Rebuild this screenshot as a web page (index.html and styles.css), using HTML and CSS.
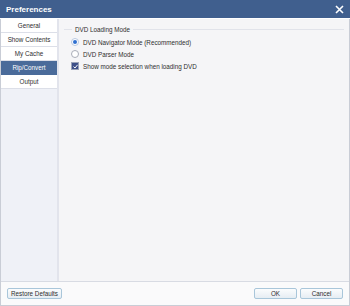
FILE: index.html
```html
<!DOCTYPE html>
<html lang="en">
<head>
    <meta charset="UTF-8">
    <title>Preferences</title>
    <link rel="stylesheet" href="styles.css">
</head>
<body>
    <div class="window">
        <header class="titlebar">
            <span class="title">Preferences</span>
            <svg class="close" width="9" height="9" viewBox="0 0 9 9">
                <path d="M1 1 L8 8 M8 1 L1 8" stroke="#fff" stroke-width="1.6" fill="none"/>
            </svg>
        </header>

        <div class="main">
            <nav class="sidebar">
                <div class="nav-item">General</div>
                <div class="nav-item">Show Contents</div>
                <div class="nav-item">My Cache</div>
                <div class="nav-item active">Rip/Convert</div>
                <div class="nav-item">Output</div>
            </nav>

            <section class="content">
                <div class="group-title">
                    <span class="line short"></span>
                    <span class="group-label">DVD Loading Mode</span>
                    <span class="line"></span>
                </div>
                <div class="options">
                    <label class="option">
                        <span class="radio checked"></span>
                        DVD Navigator Mode (Recommended)
                    </label>
                    <label class="option">
                        <span class="radio"></span>
                        DVD Parser Mode
                    </label>
                    <label class="option">
                        <span class="checkbox">
                            <svg width="5" height="5" viewBox="0 0 5 5">
                                <path d="M0.5 2.6 L2 4 L4.6 0.8" stroke="#fff" stroke-width="1" fill="none"/>
                            </svg>
                        </span>
                        Show mode selection when loading DVD
                    </label>
                </div>
            </section>
        </div>

        <footer class="footer">
            <button class="btn btn-restore">Restore Defaults</button>
            <div class="footer-right">
                <button class="btn btn-wide">OK</button>
                <button class="btn btn-wide">Cancel</button>
            </div>
        </footer>
    </div>
</body>
</html>
```

FILE: styles.css
```css
:root {
    --title-blue: #405f8e;
    --active-blue: #4a6b9a;
    --text: #2e2e2e;
    --line: #e1e3ea;
}

* {
    margin: 0;
    padding: 0;
    box-sizing: border-box;
}

body {
    font-family: 'Liberation Sans', Arial, sans-serif;
    font-size: 6.3px;
    color: var(--text);
}

.window {
    width: 350px;
    height: 306px;
    display: flex;
    flex-direction: column;
    background-color: #f5f5f7;
    border: 1px solid #c9cdd6;
    border-top: none;
}

.titlebar {
    height: 19px;
    background-color: var(--title-blue);
    display: flex;
    align-items: center;
    justify-content: space-between;
    padding: 0 6px 0 6px;
    margin: 0 -1px;
    border-bottom: 1px solid #ffffff;
}

.title {
    color: #fff;
    font-weight: bold;
    font-size: 8px;
}

.close {
    display: block;
}

.main {
    flex: 1;
    display: flex;
}

.sidebar {
    width: 58px;
    background-color: #eff1f7;
    border-right: 2px solid #e2e4ec;
}

.nav-item {
    height: 14px;
    line-height: 13px;
    text-align: center;
    background-color: #fff;
    border-bottom: 1px solid #dcdfe8;
}

.nav-item.active {
    background-color: var(--active-blue);
    color: #fff;
    border-bottom-color: var(--active-blue);
}

.content {
    flex: 1;
    padding: 6px 5px 0 5px;
}

.group-title {
    display: flex;
    align-items: center;
    height: 9px;
}

.line {
    flex: 1;
    height: 1px;
    background-color: var(--line);
}

.line.short {
    flex: none;
    width: 8px;
}

.group-label {
    padding: 0 3px;
}

.options {
    padding: 3px 0 0 7px;
    display: flex;
    flex-direction: column;
    gap: 2px;
}

.option {
    display: flex;
    align-items: center;
    gap: 4px;
    height: 10px;
}

.radio {
    width: 8px;
    height: 8px;
    border-radius: 50%;
    border: 1px solid #a9adb8;
    background-color: #fff;
    position: relative;
}

.radio.checked {
    border-color: #b9c9e2;
}

.radio.checked::after {
    content: '';
    position: absolute;
    left: 1px;
    top: 1px;
    width: 4px;
    height: 4px;
    border-radius: 50%;
    background-color: #2f6fd0;
}

.checkbox {
    width: 8px;
    height: 8px;
    border: 1px solid #9aa3b8;
    background-color: #3d4f88;
    display: flex;
    align-items: center;
    justify-content: center;
}

.checkbox svg {
    display: block;
}

.footer {
    height: 24px;
    border-top: 1px solid #d8dbe3;
    background-color: #fafafb;
    display: flex;
    align-items: center;
    justify-content: space-between;
    padding: 0 6px 0 6px;
}

.footer-right {
    display: flex;
    gap: 3px;
}

.btn {
    font-family: inherit;
    font-size: 6.3px;
    color: var(--text);
    height: 11px;
    padding: 0;
    white-space: nowrap;
    border: 1px solid #a9c6da;
    border-radius: 2px;
    background: linear-gradient(#fbfcfd, #e6edf3);
}

.btn-restore {
    width: 55px;
}

.btn-wide {
    width: 43px;
}
```
